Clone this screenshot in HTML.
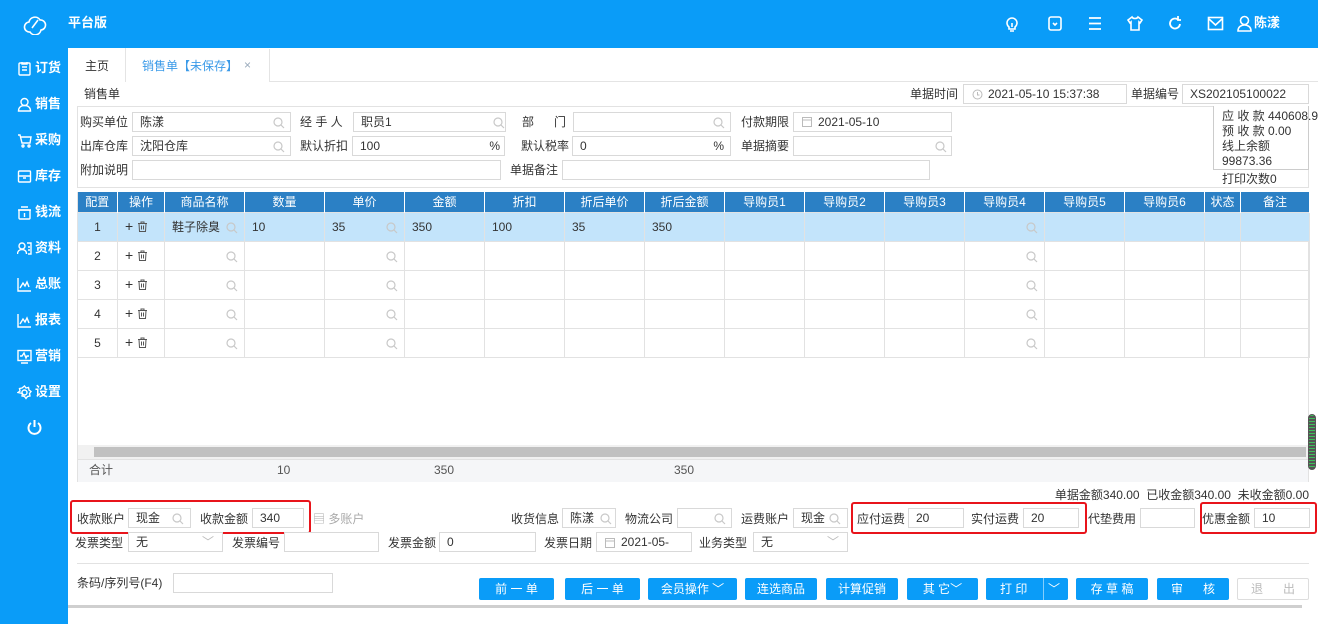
<!DOCTYPE html>
<html><head><meta charset="utf-8"><style>
*{box-sizing:border-box;margin:0;padding:0}
body{width:1318px;height:624px;overflow:hidden;background:#fff;font-family:"Liberation Sans","Noto Sans CJK SC",sans-serif;font-size:12px;color:#333;position:relative}
.a{position:absolute}
.top{left:0;top:0;width:1318px;height:48px;background:#0a9cf8}
.side{left:0;top:48px;width:68px;height:576px;background:#0a9cf8}
.si{position:absolute;left:17px;color:#fff;font-size:13px;display:flex;align-items:center;gap:3px;font-weight:bold;line-height:16px}
.si svg{width:15px;height:15px}
.l{position:absolute;font-size:12px;color:#333;white-space:nowrap;line-height:14px}
.i{position:absolute;border:1px solid #d9d9d9;background:#fff;height:20px;padding-left:7px;line-height:18px;font-size:12px;color:#333;white-space:nowrap;overflow:hidden}
.q{position:absolute;right:6px;top:4px}
table{border-collapse:collapse;table-layout:fixed;position:absolute;left:77px;top:192px;width:1232px}
th{background:#2b80c5;color:#fff;font-weight:normal;height:20px;border-right:1px solid #fff;font-size:12px;text-align:center;line-height:14px}
td{height:29px;border:1px solid #e2e2e2;font-size:12px;padding-left:7px;position:relative;line-height:14px}
tr.h td{background:#c3e4fb}
.btn{position:absolute;top:578px;height:22px;background:#0a9cf8;color:#fff;border-radius:2px;text-align:center;line-height:22px;font-size:12px}
.red{position:absolute;border:2px solid #e8141b;border-radius:3px}
</style></head><body>
<div class="a top"></div>
<svg class="a" style="left:23px;top:13px" width="24" height="22" viewBox="0 0 24 22"><path d="M7 19a5 5 0 0 1-1-10 6 6 0 0 1 11-2 5 5 0 0 1 1 10 6 6 0 0 1-11 2z M9 15l6-8" fill="none" stroke="#fff" stroke-width="1.6"/></svg>
<div class="l" style="left:68px;top:16px;color:#fff;font-size:13px;font-weight:bold">平台版</div>
<svg class="a" style="left:1004px;top:15px" width="16" height="18" viewBox="0 0 16 18" fill="none" stroke="#fff" stroke-width="1.6"><path d="M5 12a5 5 0 1 1 6 0v2H5z M6 16h4 M8 8v4"/></svg>
<svg class="a" style="left:1047px;top:15px" width="16" height="17" viewBox="0 0 16 17" fill="none" stroke="#fff" stroke-width="1.6"><rect x="2" y="2" width="12" height="13" rx="2"/><path d="M6 8l2 2 2-2"/></svg>
<svg class="a" style="left:1087px;top:16px" width="16" height="15" viewBox="0 0 16 15" fill="none" stroke="#fff" stroke-width="1.8"><path d="M2 2h12M2 7.5h12M2 13h12"/></svg>
<svg class="a" style="left:1126px;top:15px" width="18" height="17" viewBox="0 0 18 17" fill="none" stroke="#fff" stroke-width="1.6"><path d="M6 2L2 5l2 3 1-1v8h8V7l1 1 2-3-4-3c-1 2-5 2-6 0z"/></svg>
<svg class="a" style="left:1167px;top:15px" width="16" height="17" viewBox="0 0 16 17" fill="none" stroke="#fff" stroke-width="1.8"><path d="M13 9a5 5 0 1 1-2-4.5M11 1v4h3"/></svg>
<svg class="a" style="left:1207px;top:16px" width="17" height="15" viewBox="0 0 17 15" fill="none" stroke="#fff" stroke-width="1.6"><rect x="1.5" y="1.5" width="14" height="12"/><path d="M2 3l6.5 6L15 3"/></svg>
<svg class="a" style="left:1237px;top:15px" width="15" height="17" viewBox="0 0 15 17" fill="none" stroke="#fff" stroke-width="1.6"><circle cx="7.5" cy="5.5" r="4"/><path d="M1 16c0-4 3-6 6.5-6s6.5 2 6.5 6z"/></svg>
<div class="l" style="left:1254px;top:16px;color:#fff;font-size:13px;font-weight:bold">陈漾</div>

<div class="a side"></div>
<div class="si" style="top:60px"><svg viewBox="0 0 15 15" fill="none" stroke="#fff" stroke-width="1.4"><rect x="2" y="2" width="11" height="12" rx="1"/><path d="M5 6h5M5 9h5M5 1v2h5V1"/></svg>订货</div>
<div class="si" style="top:96px"><svg viewBox="0 0 15 15" fill="none" stroke="#fff" stroke-width="1.4"><circle cx="7.5" cy="5" r="3.5"/><path d="M1.5 14c0-4 3-5.5 6-5.5s6 1.5 6 5.5z"/></svg>销售</div>
<div class="si" style="top:132px"><svg viewBox="0 0 15 15" fill="none" stroke="#fff" stroke-width="1.4"><path d="M1 2h2l2 8h8l1-6H4"/><circle cx="6" cy="13" r="1"/><circle cx="12" cy="13" r="1"/></svg>采购</div>
<div class="si" style="top:168px"><svg viewBox="0 0 15 15" fill="none" stroke="#fff" stroke-width="1.4"><rect x="1.5" y="2" width="12" height="11" rx="1"/><path d="M1.5 7h12M6 9h3"/></svg>库存</div>
<div class="si" style="top:204px"><svg viewBox="0 0 15 15" fill="none" stroke="#fff" stroke-width="1.4"><rect x="2" y="5" width="11" height="9" rx="1"/><path d="M1 5h13M4 2h7M7.5 8v4"/></svg>钱流</div>
<div class="si" style="top:240px"><svg viewBox="0 0 15 15" fill="none" stroke="#fff" stroke-width="1.4"><circle cx="5" cy="5" r="3"/><path d="M0.5 13c0-3 2-4.5 4.5-4.5S9.5 10 9.5 13M10 2h4v11h-3M11 6h2M11 9h2"/></svg>资料</div>
<div class="si" style="top:276px"><svg viewBox="0 0 15 15" fill="none" stroke="#fff" stroke-width="1.4"><path d="M1 1v13h13M3 11l3-5 2 3 2-4 2 5"/></svg>总账</div>
<div class="si" style="top:312px"><svg viewBox="0 0 15 15" fill="none" stroke="#fff" stroke-width="1.4"><path d="M1 1v13h13M3 11l3-5 2 3 2-4 2 5"/></svg>报表</div>
<div class="si" style="top:348px"><svg viewBox="0 0 15 15" fill="none" stroke="#fff" stroke-width="1.4"><rect x="1" y="1.5" width="13" height="10"/><path d="M3 7h2l2-3 2 5 1-2h2M4 14h7"/></svg>营销</div>
<div class="si" style="top:384px"><svg viewBox="0 0 15 15" fill="none" stroke="#fff" stroke-width="1.4"><circle cx="7.5" cy="7.5" r="2.5"/><path d="M7.5 1l1.5 2 2.5-.5.5 2.5 2 1.5-1.5 2 .5 2.5-2.5.5-1.5 2-1.5-2-2.5-.5.5-2.5L1 7.5l2-1.5-.5-2.5L5 3z"/></svg>设置</div>
<svg class="a" style="left:26px;top:419px" width="17" height="17" viewBox="0 0 17 17" fill="none" stroke="#fff" stroke-width="2"><path d="M5 4a6 6 0 1 0 7 0M8.5 1v7"/></svg>

<div class="a" style="left:68px;top:81px;width:1250px;height:1px;background:#e4e4e4"></div>
<div class="a" style="left:68px;top:48px;width:58px;height:34px;border-right:1px solid #e4e4e4;background:#fff"></div>
<div class="l" style="left:85px;top:59px">主页</div>
<div class="a" style="left:126px;top:49px;width:144px;height:33px;border-right:1px solid #e4e4e4;background:#fff"></div>
<div class="l" style="left:142px;top:59px;color:#3a9ae8">销售单【未保存】</div>
<div class="l" style="left:244px;top:58px;color:#9ab">×</div>
<div class="l" style="left:84px;top:87px">销售单</div>

<div class="l" style="left:910px;top:87px">单据时间</div>
<div class="i" style="left:963px;top:84px;width:164px;padding-left:24px">2021-05-10 15:37:38<svg class="a" style="left:8px;top:4px" width="11" height="11" viewBox="0 0 11 11" fill="none" stroke="#bbb"><circle cx="5.5" cy="5.5" r="4.5"/><path d="M5.5 3v3h2"/></svg></div>
<div class="l" style="left:1131px;top:87px">单据编号</div>
<div class="i" style="left:1182px;top:84px;width:127px">XS202105100022</div>

<div class="a" style="left:77px;top:106px;width:1232px;height:82px;border:1px solid #e2e2e2"></div>
<div class="a" style="left:1213px;top:106px;width:96px;height:64px;border:1px solid #ccc;background:#fff;border-top:none"></div>
<div class="l" style="left:1222px;top:109px;line-height:15px">应 收 款 440608.9<br>预 收 款 0.00<br>线上余额<br>99873.36</div>
<div class="l" style="left:1222px;top:172px">打印次数0</div>

<div class="l" style="left:80px;top:115px">购买单位</div>
<div class="i" style="left:132px;top:112px;width:159px">陈漾</div>
<div class="l" style="left:300px;top:115px">经 手 人</div>
<div class="i" style="left:353px;top:112px;width:153px">职员1</div>
<div class="l" style="left:522px;top:115px">部&nbsp;&nbsp;&nbsp;&nbsp;&nbsp;&nbsp;门</div>
<div class="i" style="left:573px;top:112px;width:158px"></div>
<div class="l" style="left:741px;top:115px">付款期限</div>
<div class="i" style="left:793px;top:112px;width:159px;padding-left:24px">2021-05-10</div>

<div class="l" style="left:80px;top:139px">出库仓库</div>
<div class="i" style="left:132px;top:136px;width:159px">沈阳仓库</div>
<div class="l" style="left:300px;top:139px">默认折扣</div>
<div class="i" style="left:352px;top:136px;width:153px">100<span class="a" style="right:4px">%</span></div>
<div class="l" style="left:521px;top:139px">默认税率</div>
<div class="i" style="left:572px;top:136px;width:159px">0<span class="a" style="right:6px">%</span></div>
<div class="l" style="left:741px;top:139px">单据摘要</div>
<div class="i" style="left:793px;top:136px;width:159px"></div>

<div class="l" style="left:80px;top:163px">附加说明</div>
<div class="i" style="left:132px;top:160px;width:369px"></div>
<div class="l" style="left:510px;top:163px">单据备注</div>
<div class="i" style="left:562px;top:160px;width:368px"></div>

<svg width="0" height="0" style="position:absolute"><defs><g id="s"><circle cx="5" cy="5" r="4" fill="none" stroke="#c8c8c8" stroke-width="1.2"/><path d="M8 8l3 3" stroke="#c8c8c8" stroke-width="1.2"/></g><g id="t" fill="none" stroke="#555" stroke-width="1"><path d="M1 2.5h9M4 2.5V1h3v1.5M2 2.5l.5 8h6l.5-8M4.5 4.5v4M6.5 4.5v4"/></g></defs></svg>
<svg class="a" style="left:273px;top:117px" width="12" height="12"><use href="#s"/></svg>
<svg class="a" style="left:493px;top:117px" width="12" height="12"><use href="#s"/></svg>
<svg class="a" style="left:713px;top:117px" width="12" height="12"><use href="#s"/></svg>
<svg class="a" style="left:273px;top:141px" width="12" height="12"><use href="#s"/></svg>
<svg class="a" style="left:935px;top:141px" width="12" height="12"><use href="#s"/></svg>
<svg class="a" style="left:802px;top:116px" width="10" height="11" viewBox="0 0 10 11" fill="none" stroke="#bbb"><rect x="0.5" y="1.5" width="9" height="9"/><path d="M0 4h10"/></svg>

<div class="a" style="left:77px;top:192px;width:1232px;height:290px;border:1px solid #e2e2e2"></div>
<table>
<colgroup><col style="width:40px"><col style="width:47px"><col style="width:80px"><col style="width:80px"><col style="width:80px"><col style="width:80px"><col style="width:80px"><col style="width:80px"><col style="width:80px"><col style="width:80px"><col style="width:80px"><col style="width:80px"><col style="width:80px"><col style="width:80px"><col style="width:80px"><col style="width:36px"><col style="width:69px"></colgroup>
<tr><th>配置</th><th>操作</th><th>商品名称</th><th>数量</th><th>单价</th><th>金额</th><th>折扣</th><th>折后单价</th><th>折后金额</th><th>导购员1</th><th>导购员2</th><th>导购员3</th><th>导购员4</th><th>导购员5</th><th>导购员6</th><th>状态</th><th>备注</th></tr>
<tr class="h"><td style="text-align:center;padding:0">1</td><td><span style="font-size:14px">+</span> <svg width="11" height="11" style="vertical-align:-1px"><use href="#t"/></svg></td><td>鞋子除臭<svg class="q" style="top:9px" width="12" height="12"><use href="#s"/></svg></td><td>10</td><td>35<svg class="q" style="top:9px" width="12" height="12"><use href="#s"/></svg></td><td>350</td><td>100</td><td>35</td><td>350</td><td></td><td></td><td></td><td><svg class="q" style="top:9px" width="12" height="12"><use href="#s"/></svg></td><td></td><td></td><td></td><td></td></tr>
<tr><td style="text-align:center;padding:0">2</td><td><span style="font-size:14px">+</span> <svg width="11" height="11" style="vertical-align:-1px"><use href="#t"/></svg></td><td><svg class="q" style="top:9px" width="12" height="12"><use href="#s"/></svg></td><td></td><td><svg class="q" style="top:9px" width="12" height="12"><use href="#s"/></svg></td><td></td><td></td><td></td><td></td><td></td><td></td><td></td><td><svg class="q" style="top:9px" width="12" height="12"><use href="#s"/></svg></td><td></td><td></td><td></td><td></td></tr>
<tr><td style="text-align:center;padding:0">3</td><td><span style="font-size:14px">+</span> <svg width="11" height="11" style="vertical-align:-1px"><use href="#t"/></svg></td><td><svg class="q" style="top:9px" width="12" height="12"><use href="#s"/></svg></td><td></td><td><svg class="q" style="top:9px" width="12" height="12"><use href="#s"/></svg></td><td></td><td></td><td></td><td></td><td></td><td></td><td></td><td><svg class="q" style="top:9px" width="12" height="12"><use href="#s"/></svg></td><td></td><td></td><td></td><td></td></tr>
<tr><td style="text-align:center;padding:0">4</td><td><span style="font-size:14px">+</span> <svg width="11" height="11" style="vertical-align:-1px"><use href="#t"/></svg></td><td><svg class="q" style="top:9px" width="12" height="12"><use href="#s"/></svg></td><td></td><td><svg class="q" style="top:9px" width="12" height="12"><use href="#s"/></svg></td><td></td><td></td><td></td><td></td><td></td><td></td><td></td><td><svg class="q" style="top:9px" width="12" height="12"><use href="#s"/></svg></td><td></td><td></td><td></td><td></td></tr>
<tr><td style="text-align:center;padding:0">5</td><td><span style="font-size:14px">+</span> <svg width="11" height="11" style="vertical-align:-1px"><use href="#t"/></svg></td><td><svg class="q" style="top:9px" width="12" height="12"><use href="#s"/></svg></td><td></td><td><svg class="q" style="top:9px" width="12" height="12"><use href="#s"/></svg></td><td></td><td></td><td></td><td></td><td></td><td></td><td></td><td><svg class="q" style="top:9px" width="12" height="12"><use href="#s"/></svg></td><td></td><td></td><td></td><td></td></tr>
</table>
<div class="a" style="left:78px;top:445px;width:1230px;height:14px;background:#f1f1f1"></div>
<div class="a" style="left:94px;top:447px;width:1212px;height:10px;background:#c1c1c1"></div>
<div class="a" style="left:78px;top:459px;width:1230px;height:23px;background:#f5f6f8;border-top:1px solid #e2e2e2"></div>
<div class="l" style="left:89px;top:463px;color:#555">合计</div>
<div class="l" style="left:277px;top:463px;color:#555">10</div>
<div class="l" style="left:434px;top:463px;color:#555">350</div>
<div class="l" style="left:674px;top:463px;color:#555">350</div>
<div class="a" style="left:1308px;top:414px;width:8px;height:56px;border-radius:4px;border:1px solid #555;background:repeating-linear-gradient(#3dbf5a 0 1px,#555 1px 3px)"></div>

<div class="l" style="right:9px;top:488px">单据金额340.00&nbsp;&nbsp;已收金额340.00&nbsp;&nbsp;未收金额0.00</div>

<div class="red" style="left:70px;top:500px;width:241px;height:34px"></div>
<div class="l" style="left:77px;top:512px">收款账户</div>
<div class="i" style="left:128px;top:508px;width:63px">现金</div>
<svg class="a" style="left:172px;top:513px" width="12" height="12"><use href="#s"/></svg>
<div class="l" style="left:200px;top:512px">收款金额</div>
<div class="i" style="left:252px;top:508px;width:52px">340</div>
<div class="l" style="left:313px;top:512px;color:#aaa">▤ 多账户</div>
<div class="l" style="left:511px;top:512px">收货信息</div>
<div class="i" style="left:562px;top:508px;width:54px">陈漾</div>
<svg class="a" style="left:600px;top:513px" width="12" height="12"><use href="#s"/></svg>
<div class="l" style="left:625px;top:512px">物流公司</div>
<div class="i" style="left:677px;top:508px;width:55px"></div>
<svg class="a" style="left:714px;top:513px" width="12" height="12"><use href="#s"/></svg>
<div class="l" style="left:741px;top:512px">运费账户</div>
<div class="i" style="left:793px;top:508px;width:55px">现金</div>
<svg class="a" style="left:829px;top:513px" width="12" height="12"><use href="#s"/></svg>
<div class="red" style="left:851px;top:502px;width:236px;height:32px"></div>
<div class="l" style="left:857px;top:512px">应付运费</div>
<div class="i" style="left:908px;top:508px;width:56px">20</div>
<div class="l" style="left:971px;top:512px">实付运费</div>
<div class="i" style="left:1023px;top:508px;width:56px">20</div>
<div class="l" style="left:1088px;top:512px">代垫费用</div>
<div class="i" style="left:1140px;top:508px;width:55px"></div>
<div class="red" style="left:1200px;top:502px;width:117px;height:32px"></div>
<div class="l" style="left:1202px;top:512px">优惠金额</div>
<div class="i" style="left:1254px;top:508px;width:56px">10</div>

<div class="l" style="left:75px;top:536px">发票类型</div>
<div class="i" style="left:128px;top:532px;width:95px">无<span class="a" style="right:8px;color:#bbb">﹀</span></div>
<div class="l" style="left:232px;top:536px">发票编号</div>
<div class="i" style="left:284px;top:532px;width:95px"></div>
<div class="l" style="left:388px;top:536px">发票金额</div>
<div class="i" style="left:439px;top:532px;width:97px">0</div>
<div class="l" style="left:544px;top:536px">发票日期</div>
<div class="i" style="left:596px;top:532px;width:96px;padding-left:24px">2021-05-<svg class="a" style="left:8px;top:4px" width="10" height="11" viewBox="0 0 10 11" fill="none" stroke="#bbb"><rect x="0.5" y="1.5" width="9" height="9"/><path d="M0 4h10"/></svg></div>
<div class="l" style="left:699px;top:536px">业务类型</div>
<div class="i" style="left:753px;top:532px;width:95px">无<span class="a" style="right:8px;color:#bbb">﹀</span></div>

<div class="a" style="left:77px;top:563px;width:1232px;height:1px;background:#e2e2e2"></div>
<div class="l" style="left:77px;top:576px">条码/序列号(F4)</div>
<div class="i" style="left:173px;top:573px;width:160px"></div>

<div class="btn" style="left:479px;width:75px">前 一 单</div>
<div class="btn" style="left:565px;width:75px">后 一 单</div>
<div class="btn" style="left:648px;width:89px">会员操作 ﹀</div>
<div class="btn" style="left:745px;width:72px">连选商品</div>
<div class="btn" style="left:826px;width:72px">计算促销</div>
<div class="btn" style="left:907px;width:71px">其 它﹀</div>
<div class="btn" style="left:986px;width:82px"><span class="a" style="left:14px">打 印</span><span class="a" style="left:57px;top:0;width:1px;height:22px;background:#fff;opacity:.5"></span><span class="a" style="left:62px">﹀</span></div>
<div class="btn" style="left:1076px;width:72px">存 草 稿</div>
<div class="btn" style="left:1157px;width:72px">审&nbsp;&nbsp;&nbsp;&nbsp;&nbsp;&nbsp;核</div>
<div class="btn" style="left:1237px;width:72px;background:#fff;border:1px solid #ddd;color:#bbb;line-height:20px">退&nbsp;&nbsp;&nbsp;&nbsp;&nbsp;&nbsp;出</div>
<div class="a" style="left:68px;top:605px;width:1234px;height:3px;background:#cfcfcf"></div>
</body></html>
